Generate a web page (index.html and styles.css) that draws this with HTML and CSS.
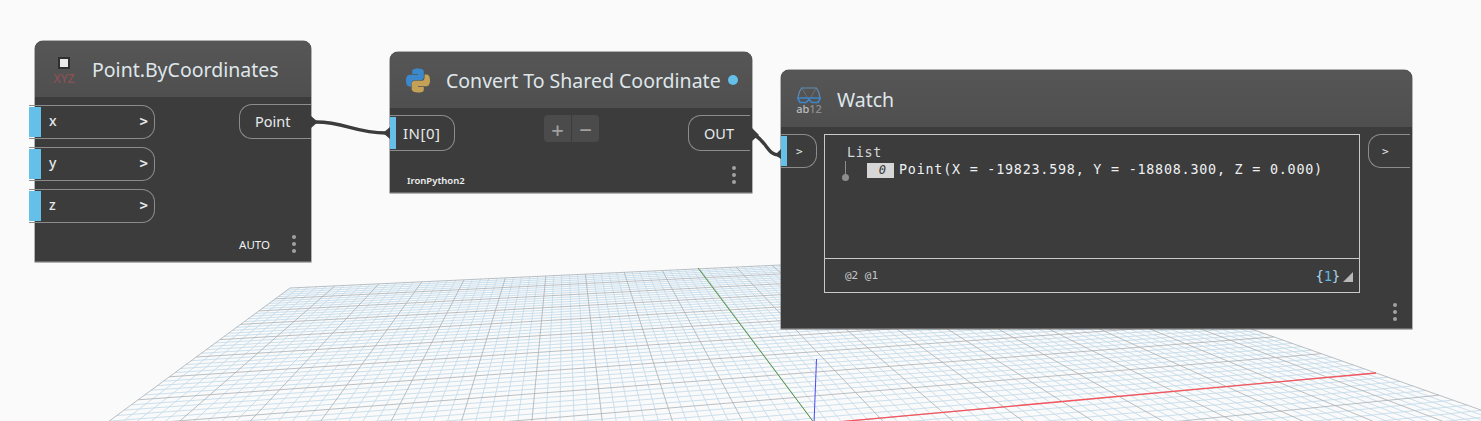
FILE: index.html
```html
<!DOCTYPE html>
<html lang="en">
<head>
<meta charset="utf-8">
<title>Dynamo graph</title>
<link rel="stylesheet" href="styles.css">
</head>
<body>
<main class="canvas">
  <svg class="scene" id="scene" width="1481" height="421" viewBox="0 0 1481 421" aria-hidden="true">
    <path id="grid-minor" class="grid-minor"/>
    <path id="grid-major" class="grid-major"/>
    <line class="axis-green" x1="698" y1="268" x2="815" y2="424"/>
    <line class="axis-red" x1="1376" y1="373" x2="815" y2="424"/>
    <line class="axis-blue" x1="816.5" y1="359" x2="814" y2="424"/>
  </svg>

  <section class="node node-point">
    <header class="node-head">
      <div class="icon-xyz"><span class="xyz-square"></span><span class="xyz-text">XYZ</span></div>
      <h2 class="title">Point.ByCoordinates</h2>
    </header>
    <div class="node-body">
      <div class="ports">
        <div class="port port-wide"><span class="bar bar-over"></span><span class="port-name">x</span><span class="chev">&gt;</span></div>
        <div class="port port-wide"><span class="bar bar-over"></span><span class="port-name">y</span><span class="chev">&gt;</span></div>
        <div class="port port-wide"><span class="bar bar-over"></span><span class="port-name">z</span><span class="chev">&gt;</span></div>
      </div>
      <div class="out out-point">Point</div>
    </div>
    <footer class="node-foot foot-point"><span class="lacing">AUTO</span><span class="dots"><i></i><i></i><i></i></span></footer>
  </section>

  <section class="node node-python">
    <header class="node-head">
      <svg class="icon-python" viewBox="0 0 24 24" aria-hidden="true">
        <path fill="#3c88cc" d="M11.914 0C5.82 0 6.2 2.656 6.2 2.656l.007 2.752h5.814v.826H3.9S0 5.789 0 11.969c0 6.18 3.403 5.96 3.403 5.96h2.03v-2.867s-.109-3.42 3.35-3.42h5.766s3.24.052 3.24-3.148V3.202S18.28 0 11.913 0z"/>
        <path fill="#c3a157" d="M12.087 24c6.092 0 5.712-2.656 5.712-2.656l-.007-2.752h-5.814v-.826h8.123s3.9.445 3.9-5.735c0-6.18-3.404-5.96-3.404-5.96h-2.03v2.867s.109 3.42-3.35 3.42H8.95s-3.24-.052-3.24 3.148v5.292S5.72 24 12.087 24z"/>
      </svg>
      <h2 class="title">Convert To Shared Coordinate</h2>
      <span class="status-dot"></span>
    </header>
    <div class="node-body">
      <div class="port port-in"><span class="bar"></span><span class="port-label">IN[0]</span></div>
      <div class="stepper"><span class="step step-plus">+</span><span class="step step-minus">&minus;</span></div>
      <div class="out out-python">OUT</div>
    </div>
    <footer class="node-foot foot-python"><span class="engine">IronPython2</span><span class="dots"><i></i><i></i><i></i></span></footer>
  </section>

  <section class="node node-watch">
    <header class="node-head">
      <div class="icon-watch">
        <svg class="goggles" viewBox="0 0 24 17" aria-hidden="true">
          <path class="strap-in" d="M5 1.2 10 10M19 1.2 14 10"/>
          <path class="strap" d="M1 10.5C1.5 7 3 3 4.5 1H19.5C21 3 22.5 7 23 10.5"/>
          <path class="lens" d="M.5 11H23.5L21 15.5H15L12 12.5 9 15.5H3Z"/>
        </svg>
        <span class="ab12">ab<span class="ab12-dim">12</span></span>
      </div>
      <h2 class="title">Watch</h2>
    </header>
    <div class="watch-body">
      <div class="port port-watch"><span class="bar"></span><span class="chev">&gt;</span></div>
      <div class="watch-box">
        <div class="watch-tree">
          <div class="tree-list">List</div>
          <div class="tree-row">
            <span class="tree-stem"></span>
            <span class="tree-index">0</span>
            <span class="tree-value">Point(X = -19823.598, Y = -18808.300, Z = 0.000)</span>
          </div>
        </div>
        <div class="watch-foot">
          <span class="levels">@2 @1</span>
          <span class="count">{<b>1</b>}</span>
          <span class="resize"></span>
        </div>
      </div>
      <div class="out out-watch"><span class="chev">&gt;</span></div>
    </div>
    <footer class="node-foot foot-watch"><span class="dots"><i></i><i></i><i></i></span></footer>
  </section>

  <svg class="wires" width="1481" height="421" viewBox="0 0 1481 421" aria-hidden="true">
    <path class="wire" d="M316 122C345 122 355 133 386 133"/>
    <path class="wire" d="M755 135C768 144 768 155 779 155"/>
    <path class="cap" d="M311 116 318 122 311 128Z"/>
    <path class="cap" d="M390 127 383 133 390 139Z"/>
    <path class="cap" d="M752 128 759 135 752 141Z"/>
    <path class="cap" d="M781 149 775 155 781 159Z"/>
  </svg>
</main>
<script src="grid.js"></script>
</body>
</html>
```
FILE: styles.css
```css
* { box-sizing: border-box; }
html, body { margin: 0; padding: 0; }
body {
  width: 1481px;
  height: 421px;
  overflow: hidden;
  background: #fafafa;
  font-family: "Noto Sans", "Open Sans", sans-serif;
}
.canvas { position: relative; width: 1481px; height: 421px; overflow: hidden; }
.scene, .wires { position: absolute; left: 0; top: 0; }
.wires { pointer-events: none; }
.grid-minor { fill: none; stroke: #c3dbea; stroke-width: 1; opacity: .85; }
.grid-major { fill: none; stroke: #a7b0b6; stroke-width: 1; opacity: .8; }
.axis-green { stroke: #4e9a45; stroke-width: 1; }
.axis-red { stroke: #f4555f; stroke-width: 1.3; }
.axis-blue { stroke: #4a4af0; stroke-width: 1; }
.wire { fill: none; stroke: #3c3c3c; stroke-width: 3.4; }
.cap { fill: #3c3c3c; }

.node {
  position: absolute;
  display: flex;
  flex-direction: column;
  background: #3c3c3c;
  border-radius: 8px 8px 0 0;
  border-bottom: 1px solid #6b6b6b;
  box-shadow: 0 0 0 .5px #6b6b6b;
  color: #e6e9eb;
}
.node-point { left: 35px; top: 41px; width: 276px; height: 221px; }
.node-python { left: 390px; top: 52px; width: 362px; height: 141px; }
.node-watch { left: 781px; top: 70px; width: 631px; height: 259px; }

.node-head {
  display: flex;
  align-items: center;
  height: 56px;
  flex: none;
  background: linear-gradient(#565656, #4f4f4f);
  border-radius: 8px 8px 0 0;
}
.node-watch .node-head { height: 57px; }
.title { margin: 0; font-size: 19.5px; font-weight: 400; color: #dfe6ea; white-space: nowrap; }
.node-watch .title { padding-top: 1px; }

.icon-xyz { display: flex; flex-direction: column; align-items: center; width: 24px; margin: 0 16px 0 17px; padding-top: 4px; }
.xyz-square { width: 12px; height: 12px; background: #e9e9e9; border: 2px solid #2f2f2f; }
.xyz-text { font-size: 12px; line-height: 13px; margin-top: 3px; color: #8c5054; font-weight: 500; }

.icon-python { width: 24px; height: 25px; margin: 1px 16px 0 16px; flex: none; }
.status-dot { width: 10px; height: 10px; border-radius: 50%; background: #64bfe9; margin-left: 7px; }

.icon-watch { display: flex; flex-direction: column; align-items: center; width: 26px; margin: 0 15px; padding-top: 4px; }
.goggles { width: 24px; height: 17px; display: block; flex: none; }
.strap { fill: none; stroke: #5f8db5; stroke-width: 1.2; }
.strap-in { fill: none; stroke: #8a8f93; stroke-width: .8; opacity: .6; }
.lens { fill: none; stroke: #3f86c9; stroke-width: 1.6; }
.ab12 { font-size: 11px; line-height: 10px; color: #bdbdbd; font-weight: 500; }
.ab12-dim { color: #8f8f8f; }

.node-body { display: flex; justify-content: space-between; }
.node-point .node-body { padding-top: 8px; }
.node-python .node-body { padding: 7px 2px 0 0; }
.ports { display: flex; flex-direction: column; gap: 8px; margin-left: -6px; }

.port {
  display: flex;
  align-items: center;
  border: 1px solid #8c8c8c;
  border-left: 0;
  border-radius: 0 13px 13px 0;
  font-size: 15px;
}
.bar { align-self: stretch; background: #64bfe9; width: 6px; margin: 1px 0; flex: none; }
.bar-over { width: 12px; }
.port-wide { width: 126px; height: 34px; }
.port-name { margin-left: 8px; flex: 1; line-height: 1; padding-bottom: 2px; font-size: 14px; font-weight: 500; }
.chev { font-size: 14px; color: #e6e9eb; font-family: "DejaVu Sans Mono", monospace; font-weight: 700; }
.port-wide .chev { margin-right: 6px; padding-bottom: 2px; }
.port-in { width: 65px; height: 36px; }
.port-label { margin-left: 7px; letter-spacing: .5px; }

.out {
  display: flex;
  align-items: center;
  border: 1px solid #8c8c8c;
  border-right: 0;
  border-radius: 13px 0 0 13px;
  font-size: 14.5px;
}
.out-point { width: 72px; height: 35px; padding: 0 0 2px 15px; margin-top: -1px; }
.out-python { width: 62px; height: 36px; padding-left: 15px; }
.out-watch { width: 42px; height: 34px; margin-left: 8px; padding-left: 13px; align-self: flex-start; }
.out-watch .chev, .port-watch .chev { font-size: 11px; font-weight: 400; }

.stepper { display: flex; gap: 1px; }
.step {
  display: flex;
  align-items: center;
  justify-content: center;
  height: 27px;
  background: #4b4b4b;
  color: #a0a0a0;
  font-size: 22px;
  font-weight: 500;
  line-height: 1;
}
.step-plus { width: 27px; border-radius: 4px 0 0 4px; }
.step-minus { width: 27px; border-radius: 0 4px 4px 0; }

.node-foot { display: flex; align-items: center; margin-top: auto; }
.foot-point { justify-content: flex-end; padding: 0 15px 8px 0; gap: 22px; }
.foot-python { justify-content: space-between; align-items: flex-end; padding: 0 16px 8px 17px; }
.foot-watch { justify-content: flex-end; padding: 0 15px 7px 0; }
.lacing { font-size: 11.5px; color: #eef0f1; }
.engine { font-size: 9.5px; font-weight: 600; color: #eef0f1; margin-bottom: -3px; }
.dots { display: flex; flex-direction: column; gap: 3px; }
.dots i { display: block; width: 4px; height: 4px; border-radius: 50%; background: #a2a2a2; }

.watch-body { display: flex; align-items: flex-start; padding: 7px 2px 0 0; }
.port-watch { width: 36px; height: 34px; }
.port-watch .chev { margin-left: 9px; }
.watch-box {
  display: flex;
  flex-direction: column;
  width: 536px;
  height: 159px;
  margin-left: 7px;
  border: 1.5px solid #c9c9c9;
  font-family: "DejaVu Sans Mono", monospace;
}
.watch-tree { flex: 1; padding: 10px 0 0 20px; font-size: 13.4px; line-height: 16px; }
.tree-list { color: #d4d8da; letter-spacing: .7px; margin-left: 2px; }
.tree-row { display: flex; align-items: center; position: relative; margin-top: 1px; }
.tree-stem {
  position: relative;
  width: 1px;
  height: 15px;
  margin-right: 21px;
  background: #8d8d8d;
  top: -2px;
}
.tree-stem::after {
  content: "";
  position: absolute;
  left: -3px;
  bottom: -5px;
  width: 7px;
  height: 7px;
  border-radius: 50%;
  background: #8d8d8d;
}
.tree-index {
  width: 27px;
  height: 15px;
  margin-right: 5px;
  padding-right: 8px;
  background: #d6d6d6;
  color: #333;
  font-style: italic;
  font-size: 12px;
  line-height: 15px;
  text-align: right;
}
.tree-value { color: #eef1f3; letter-spacing: .77px; white-space: nowrap; }
.watch-foot {
  display: flex;
  align-items: center;
  height: 34px;
  flex: none;
  padding: 0 6px 0 20px;
  border-top: 1.5px solid #c9c9c9;
}
.levels { flex: 1; font-size: 11px; color: #c3c7c9; }
.count { font-size: 14px; color: #a9d3ea; letter-spacing: -.3px; }
.count b { font-weight: 400; color: #5fb4e6; }
.resize {
  width: 0;
  height: 0;
  margin: 2px 0 0 3px;
  border-left: 10px solid transparent;
  border-bottom: 10px solid #b8b8b8;
}
```
FILE: grid.js
```js
// Perspective ground grid: a homography from plane (u, v) to screen (x, y).
(function () {
  var g = 0.1815, h = 0.851;
  var a = 810.7, b = 479.9, c = 815;
  var d = 16.7, e = 73.5, f = 424;

  function project(u, v) {
    var w = g * u + h * v + 1;
    return ((a * u + b * v + c) / w).toFixed(1) + " " + ((d * u + e * v + f) / w).toFixed(1);
  }

  var V_MIN = -0.2, CELLS = 10, SUB = 5;
  var minor = "", major = "";
  for (var i = -CELLS * SUB; i <= CELLS * SUB; i++) {
    var t = i / (CELLS * SUB);
    var seg = "M" + project(t, V_MIN) + "L" + project(t, 1);
    if (i % SUB === 0) major += seg; else minor += seg;
    if (t >= V_MIN) {
      var seg2 = "M" + project(-1, t) + "L" + project(1, t);
      if (i % SUB === 0) major += seg2; else minor += seg2;
    }
  }
  document.getElementById("grid-minor").setAttribute("d", minor);
  document.getElementById("grid-major").setAttribute("d", major);
})();
```
